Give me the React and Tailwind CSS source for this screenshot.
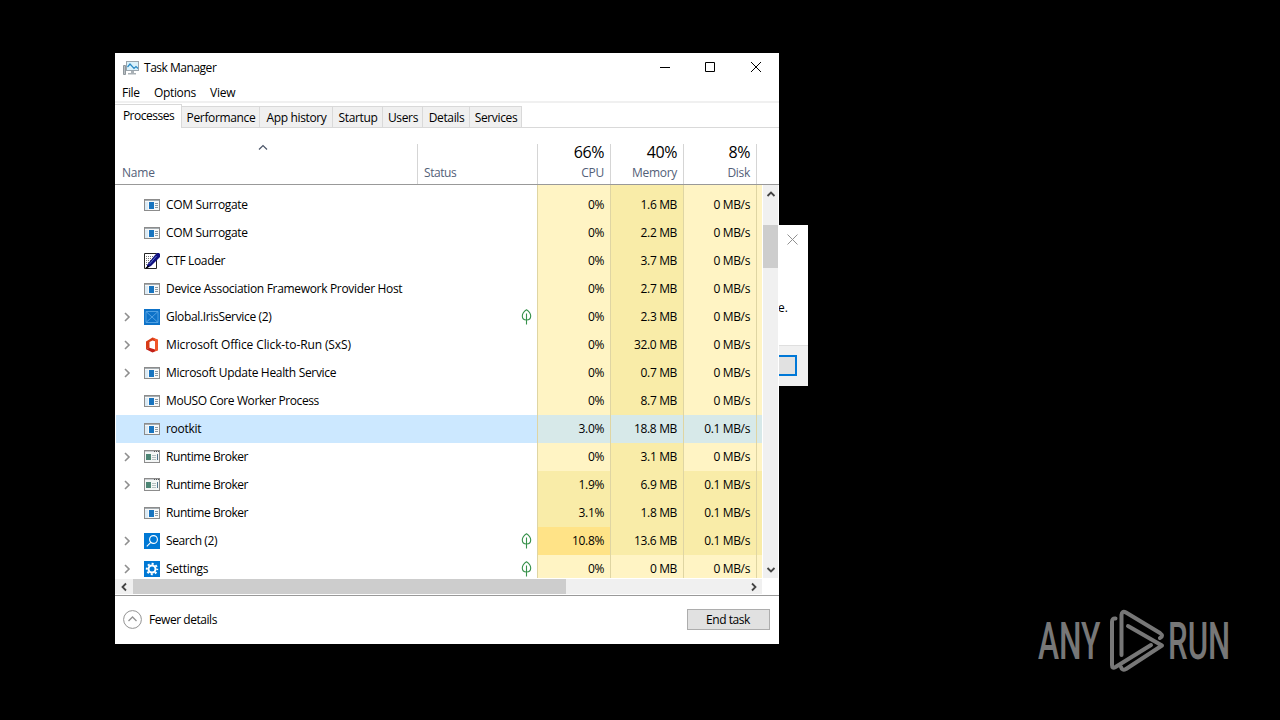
import React from 'react';
import clsx from 'clsx';

const processes = [
  { name: 'COM Surrogate', icon: 'app', spacing: 'tracking-[-0.33px]', cpu: '0%', memory: '1.6 MB', disk: '0 MB/s' },
  { name: 'COM Surrogate', icon: 'app', spacing: 'tracking-[-0.33px]', cpu: '0%', memory: '2.2 MB', disk: '0 MB/s' },
  { name: 'CTF Loader', icon: 'ctf', spacing: 'tracking-[-0.35px]', cpu: '0%', memory: '3.7 MB', disk: '0 MB/s' },
  { name: 'Device Association Framework Provider Host', icon: 'app', spacing: 'tracking-[-0.32px]', cpu: '0%', memory: '2.7 MB', disk: '0 MB/s' },
  { name: 'Global.IrisService (2)', icon: 'iris', spacing: 'tracking-[-0.34px]', expandable: true, leaf: true, cpu: '0%', memory: '2.3 MB', disk: '0 MB/s' },
  { name: 'Microsoft Office Click-to-Run (SxS)', icon: 'office', spacing: 'tracking-[-0.11px]', expandable: true, cpu: '0%', memory: '32.0 MB', disk: '0 MB/s' },
  { name: 'Microsoft Update Health Service', icon: 'app', spacing: 'tracking-[-0.32px]', expandable: true, cpu: '0%', memory: '0.7 MB', disk: '0 MB/s' },
  { name: 'MoUSO Core Worker Process', icon: 'app', spacing: 'tracking-[-0.4px]', cpu: '0%', memory: '8.7 MB', disk: '0 MB/s' },
  { name: 'rootkit', icon: 'app', spacing: 'tracking-[-0.3px]', selected: true, cpu: '3.0%', memory: '18.8 MB', disk: '0.1 MB/s' },
  { name: 'Runtime Broker', icon: 'broker', spacing: 'tracking-[-0.44px]', expandable: true, cpu: '0%', memory: '3.1 MB', disk: '0 MB/s' },
  { name: 'Runtime Broker', icon: 'broker', spacing: 'tracking-[-0.44px]', expandable: true, cpu: '1.9%', memory: '6.9 MB', disk: '0.1 MB/s' },
  { name: 'Runtime Broker', icon: 'app', spacing: 'tracking-[-0.44px]', cpu: '3.1%', memory: '1.8 MB', disk: '0.1 MB/s' },
  { name: 'Search (2)', icon: 'search', spacing: 'tracking-[-0.4px]', expandable: true, leaf: true, cpu: '10.8%', memory: '13.6 MB', disk: '0.1 MB/s' },
  { name: 'Settings', icon: 'settings', spacing: 'tracking-[-0.3px]', expandable: true, leaf: true, cpu: '0%', memory: '0 MB', disk: '0 MB/s' },
];

const tabs = [
  { label: 'Performance', width: 'w-[78px]' },
  { label: 'App history', width: 'w-[73px]' },
  { label: 'Startup', width: 'w-[50px]' },
  { label: 'Users', width: 'w-[40px]' },
  { label: 'Details', width: 'w-[47px]' },
  { label: 'Services', width: 'w-[52px]' },
];

const icons = {
  app: (
    <>
      <rect x="0.5" y="2.5" width="15" height="11" fill="#f8f8f8" stroke="#8c8c8c" />
      <path d="M1 3.5h14" stroke="#a5adb2" />
      <rect x="1" y="5" width="3" height="8" fill="#dcebf5" />
      <rect x="5" y="5" width="5" height="7" fill="#1874bf" />
      <path d="M11 6.5h3M11 8.5h3M11 10.5h3" stroke="#8d9ba5" />
    </>
  ),
  broker: (
    <>
      <rect x="0.5" y="1.5" width="15" height="12" fill="#f4f6f6" stroke="#8c8c8c" />
      <path d="M1 2.5h14" stroke="#c9cdd0" />
      <path d="M10 2.5h1M12 2.5h1M14 2.5h1" stroke="#555" />
      <rect x="2" y="5" width="5" height="6" fill="#4c8574" />
      <path d="M8 6.5h4M8 8.5h4M8 10.5h4" stroke="#b5c0c0" />
      <path d="M13.5 5v6" stroke="#51768d" />
    </>
  ),
  ctf: (
    <>
      <path d="M0.5 0.5h12v15h-12z" fill="#fff" stroke="#222" />
      <path d="M2 3.5h8M2 5.500h8M2 7.500h6M2 9.500h4M2 11.500h2" stroke="#777" strokeDasharray="1 1" />
      <path d="M3 12l8-10 2-2h2l1 1v3L7 13l-4 2z" fill="#101080" />
      <path d="M5.500 11l7-8" stroke="#5c78c8" />
      <path d="M2 15l3-2" stroke="#000" strokeWidth="1.5" />
    </>
  ),
  iris: (
    <>
      <rect width="16" height="16" fill="#0d72c8" />
      <path d="M2 2.500h12v11H2zM2 2.500l12 11M14 2.500l-12 11" fill="none" stroke="#58a5e4" strokeWidth="0.9" />
    </>
  ),
  office: (
    <>
      <path d="M2 4.500L8.500.5 11 1.600v2.700L8.500 3.500 5.500 5v6L2 12.200z" fill="#d83b16" />
      <path d="M8.500.5L14 2.500v11l-3 1V3.500z" fill="#f0562a" />
      <path d="M2 12.200l3.500-1.400L11 12.500v2l-2.500 1z" fill="#c22018" />
    </>
  ),
  search: (
    <>
      <rect width="16" height="16" fill="#0078d4" />
      <circle cx="9.5" cy="6.5" r="3.9" fill="none" stroke="#fff" strokeWidth="1.1" />
      <path d="M6.800 9.400l-4 4" stroke="#fff" strokeWidth="1.1" />
    </>
  ),
  settings: (
    <>
      <rect width="16" height="16" fill="#0078d4" />
      <circle cx="8" cy="8" r="5.2" fill="none" stroke="#fff" strokeWidth="2" strokeDasharray="2 2.084" strokeDashoffset="1" />
      <circle cx="8" cy="8" r="3.5" fill="none" stroke="#fff" strokeWidth="2" />
    </>
  ),
};

const ProcessIcon = ({ type }) => (
  <svg width="16" height="16" viewBox="0 0 16 16" className="shrink-0">{icons[type]}</svg>
);

const Chevron = ({ d, color = '#444', stroke = 1.6 }) => (
  <svg width="10" height="10" viewBox="0 0 10 10" className="shrink-0">
    <path d={d} fill="none" stroke={color} strokeWidth={stroke} />
  </svg>
);

const Leaf = () => (
  <svg width="11" height="16" viewBox="0 0 11 16" className="shrink-0">
    <path d="M5.5 .8C3 2.5 1.3 4.5 1.3 7c0 2.4 1.8 4 4.2 4s4.2-1.6 4.2-4c0-2.5-1.7-4.5-4.2-6.2zM5.5 4.5V15.5" fill="none" stroke="#37914b" strokeWidth="1.1" />
  </svg>
);

const heat = (value, selected) => {
  if (selected) return 'bg-[#d7e9e9]';
  if (value === '10.8%') return 'bg-[#ffe387]';
  if (['0%', '0 MB', '0 MB/s'].includes(value)) return 'bg-[#fff4c4]';
  return 'bg-[#f9eca8]';
};

const Cell = ({ value, selected }) => (
  <div className={clsx('w-[73px] shrink-0 border-r border-[#dfd5a3] pr-[6px] text-right tracking-[-0.35px]', heat(value, selected))}>
    {value}
  </div>
);

const ProcessRow = ({ process }) => (
  <div className={clsx('flex h-7 shrink-0 leading-[27px]', process.selected && 'bg-[#cce8ff]')}>
    <div className="flex w-[422px] shrink-0 items-center border-r border-[#dfd5a3] pl-[6px]">
      <div className="flex w-[22px] shrink-0">
        {process.expandable && <Chevron d="M3 1l4 4-4 4" color="#8f8f8f" />}
      </div>
      <ProcessIcon type={process.icon} />
      <span className={clsx('ml-[6px] h-7 grow whitespace-nowrap', process.spacing)}>{process.name}</span>
      {process.leaf && <div className="mr-[5px]"><Leaf /></div>}
    </div>
    <Cell value={process.cpu} selected={process.selected} />
    <Cell value={process.memory} selected={process.selected} />
    <Cell value={process.disk} selected={process.selected} />
    <div className={clsx('w-[5px]', heat(process.disk, process.selected))} />
  </div>
);

const HeaderCell = ({ total, label }) => (
  <div className="flex w-[73px] flex-col items-end border-r border-[#d5d5d5] pr-[6px]">
    <span className="h-[19px] text-[16px] leading-[17px] tracking-[-0.4px] text-black">{total}</span>
    <span className="h-5 leading-5 tracking-[-0.3px]">{label}</span>
  </div>
);

const TaskManager = () => (
  <div className="absolute left-[115px] top-[53px] flex h-[591px] w-[664px] flex-col bg-white">
    {/* Title bar */}
    <div className="flex h-[29px] items-center pl-2">
      <svg width="16" height="16" viewBox="0 0 16 16">
        <path d="M.5 5.500h2v9h-2z" fill="#b9bec2" stroke="#8f979c" />
        <rect x="3.5" y="1.500" width="12" height="9" fill="#d9f1fb" stroke="#9aa5ad" />
        <path d="M4.500 7l2.500-3 4 4.500 2-2 2 2" fill="none" stroke="#2989c5" strokeWidth="1.2" />
        <path d="M8 11h3v2h2v1.500H5V13h3z" fill="#aab1b6" />
      </svg>
      <span className="ml-[5px] grow tracking-[-0.48px]">Task Manager</span>
      <svg width="120" height="12" viewBox="0 0 120 12" className="mb-[2px] mr-[6px]">
        <path d="M7 6.500h10M52.500 1.500h9v9h-9z" fill="none" stroke="#000" />
        <path d="M98 1l10 10M108 1l-10 10" stroke="#000" />
      </svg>
    </div>
    <div className="flex h-[21px] border-b-2 border-[#f0f0f0] pl-[7px] leading-[21px]">
      <span className="w-8 tracking-[-0.3px]">File</span>
      <span className="w-14 tracking-[-0.35px]">Options</span>
      <span className="tracking-[-0.2px]">View</span>
    </div>

    {/* Tabs */}
    <div className="flex h-[25px] items-end border-b border-[#d9d9d9]">
      <div className="-mb-px h-[24px] w-[67px] border-r border-t border-[#d9d9d9] bg-white pl-px text-center leading-[21px] tracking-[-0.5px]">Processes</div>
      {tabs.map(tab => (
        <div key={tab.label} className={clsx('h-[21px] whitespace-nowrap border-r border-t border-[#d9d9d9] bg-[#f0f0f0] pl-px text-center leading-[21px] tracking-[-0.35px]', tab.width)}>
          {tab.label}
        </div>
      ))}
    </div>

    {/* Column headers */}
    <div className="flex h-[57px] shrink-0 border-b border-[#999] pt-4 text-[#536078]">
      <div className="flex w-[303px] flex-col border-r border-[#d5d5d5] pl-[7px]">
        <div className="flex h-[19px] justify-center pr-[14px]">
          <Chevron d="M1 5.500l4-4 4 4" color="#4b5568" stroke={1.2} />
        </div>
        <span className="h-5 leading-5 tracking-[-0.2px]">Name</span>
      </div>
      <div className="w-[120px] border-r border-[#d5d5d5] pl-[6px] pt-[19px] leading-5 tracking-[-0.45px]">Status</div>
      <HeaderCell total="66%" label="CPU" />
      <HeaderCell total="40%" label="Memory" />
      <HeaderCell total="8%" label="Disk" />
    </div>

    {/* Process list */}
    <div className="flex h-[393px] shrink-0">
      <div className="flex w-[647px] flex-col overflow-hidden pl-px">
        <div className="flex h-[6px] shrink-0">
          <div className="w-[422px] border-r border-[#dfd5a3]" />
          <div className="w-[73px] border-r border-[#dfd5a3] bg-[#fff4c4]" />
          <div className="w-[73px] border-r border-[#dfd5a3] bg-[#f9eca8]" />
          <div className="w-[73px] border-r border-[#dfd5a3] bg-[#fff4c4]" />
          <div className="w-[5px] bg-[#fff4c4]" />
        </div>
        {processes.map((process, i) => <ProcessRow key={i} process={process} />)}
      </div>
      <div className="ml-px flex w-[15px] flex-col items-center justify-between bg-[#f0f0f0]">
        <div className="flex w-full flex-col items-center pt-1">
          <Chevron d="M1.500 7l3.500-3.500L8.500 7" stroke={1.8} />
          <div className="mt-[26px] h-[43px] w-full bg-[#cdcdcd]" />
        </div>
        <div className="pb-[3px]"><Chevron d="M1.500 3l3.500 3.500L8.500 3" stroke={1.8} /></div>
      </div>
    </div>
    <div className="flex h-[18px] shrink-0 border-b border-[#999] pt-px">
      <div className="flex h-[15px] w-[647px] items-center bg-[#f0f0f0] pl-[4px]">
        <Chevron d="M7 1.500L3.500 5 7 8.500" stroke={1.8} />
        <div className="ml-1 mr-auto h-full w-[433px] bg-[#cdcdcd]" />
        <div className="mr-[3px] flex"><Chevron d="M3 1.500L6.500 5 3 8.500" stroke={1.8} /></div>
      </div>
    </div>

    {/* Footer */}
    <div className="flex h-[47px] items-center pl-2 pr-[9px]">
      <svg width="19" height="19" viewBox="0 0 19 19">
        <circle cx="9.500" cy="9.500" r="8.900" fill="none" stroke="#929292" />
        <path d="M5.500 11l4-4 4 4" fill="none" stroke="#929292" strokeWidth="1.300" />
      </svg>
      <span className="ml-[7px] grow tracking-[-0.45px]">Fewer details</span>
      <div className="h-[21px] w-[83px] border border-[#adadad] bg-[#e1e1e1] pr-px text-center leading-[19px] tracking-[-0.45px]">End task</div>
    </div>
  </div>
);

const Dialog = () => (
  <div className="absolute left-[700px] top-[225px] flex h-[161px] w-[108px] flex-col bg-white">
    <div className="flex h-[28px] items-center justify-end pr-[10px]">
      <svg width="11" height="11" viewBox="0 0 11 11"><path d="M.5.5l10 10M10.500.5l-10 10" stroke="#909090" /></svg>
    </div>
    <div className="grow pr-5 pt-[46px] text-right leading-[18px]">e.</div>
    <div className="flex h-[41px] items-center justify-end border-t border-[#dfdfdf] bg-[#f0f0f0] pb-px pr-[11px]">
      <div className="h-[21px] w-[75px] border-2 border-[#0078d7] bg-[#e1e1e1]" />
    </div>
  </div>
);

const Watermark = () => (
  <div className="absolute left-[1038px] top-[608px] flex h-[66px] w-[196px] items-center font-['Roboto'] text-[52px] font-medium leading-[66px] text-[#777]">
    <div className="w-[70px] pt-[2px]"><span className="inline-block origin-left scale-x-[0.61]">ANY</span></div>
    <svg width="60" height="64" viewBox="0 0 60 64" className="shrink-0" fill="none" stroke="#777" strokeWidth="4" strokeLinecap="round" strokeLinejoin="round">
      <path d="M7.500 9.500Q4 9 4 13V56Q4 60 7.500 58L43 36" />
      <path d="M13.500 46V6Q14 1 18 3.500L52 24Q56 27 52 29" />
      <path d="M20 17L54 36.500L18 60Q14 62 13 58" />
    </svg>
    <div className="pt-[2px]"><span className="inline-block origin-left scale-x-[0.6]">RUN</span></div>
  </div>
);

const App = () => (
  <div className="relative h-[720px] w-[1280px] overflow-hidden bg-black font-['Open_Sans','Noto_Sans',sans-serif] text-[12px] text-black">
    <Dialog />
    <TaskManager />
    <Watermark />
  </div>
);

export default App;
